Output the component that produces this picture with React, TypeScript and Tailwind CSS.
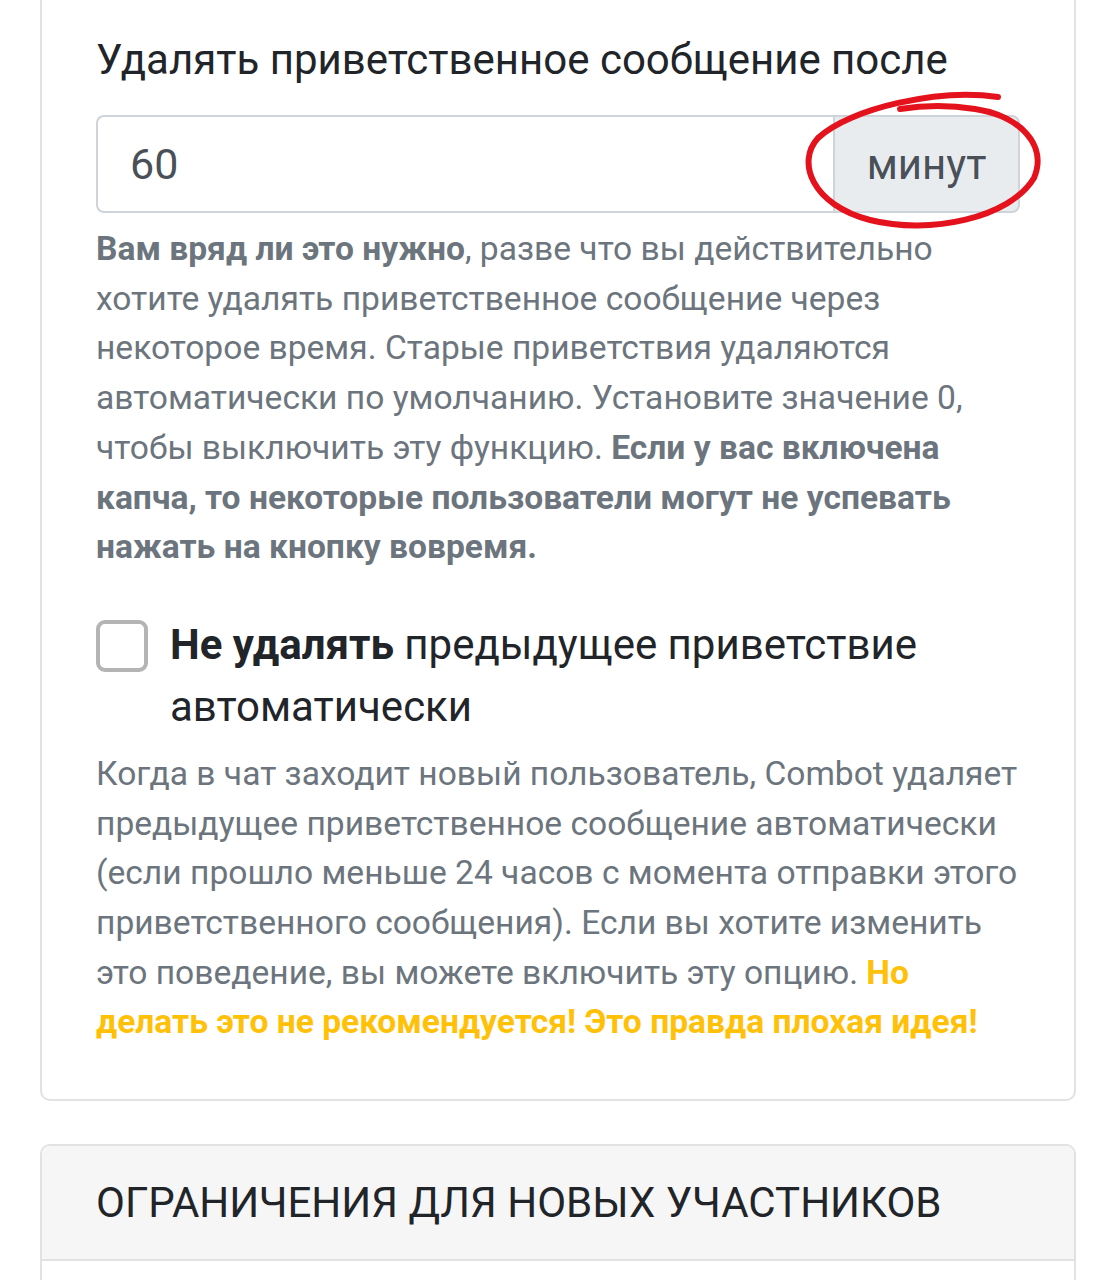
export default function App() {
  const help = "text-[#6c757d] text-[33.6px] leading-[49.7px]";
  return (
    <div className="relative w-[1114px] h-[1280px] overflow-hidden bg-white" style={{ fontFamily: "Roboto, 'Noto Sans', sans-serif" }}>
      <div className="ml-[40px] mr-[38px] border-2 border-t-0 border-[#e2e2e2] rounded-b-[10px] px-[54px] pt-[31px] pb-[52px]">
        <div className="text-[42px] leading-[58px] text-[#212529]">Удалять приветственное сообщение после</div>
        <div className="mt-[26px] flex h-[98px]">
          <div className="flex-1 flex items-center border-2 border-r-0 border-[#ced4da] rounded-l-[8px] pl-[32px] text-[43px] text-[#495057]">60</div>
          <div className="w-[187px] flex items-center justify-center border-2 border-[#ced4da] rounded-r-[8px] bg-[#e9ecef] text-[42px] text-[#495057]">минут</div>
        </div>
        <p className={`mt-[11px] ${help}`}>
          <b className="font-bold">Вам вряд ли это нужно</b>, разве что вы действительно хотите удалять приветственное сообщение через некоторое время. Старые приветствия удаляются автоматически по умолчанию. Установите значение 0, чтобы выключить эту функцию. <b className="font-bold">Если у вас включена капча, то некоторые пользователи могут не успевать нажать на кнопку вовремя.</b>
        </p>
        <div className="mt-[42px] flex gap-[22px]">
          <div className="mt-[6px] shrink-0 w-[52px] h-[52px] rounded-[9px] border-[4px] border-[#b4b4b4] bg-white"></div>
          <div className="text-[42px] leading-[62px] text-[#212529]">
            <b className="font-bold">Не удалять</b> предыдущее приветствие автоматически
          </div>
        </div>
        <p className={`mt-[11px] ${help}`}>
          Когда в чат заходит новый пользователь, Combot удаляет предыдущее приветственное сообщение автоматически (если прошло меньше 24 часов с момента отправки этого приветственного сообщения). Если вы хотите изменить это поведение, вы можете включить эту опцию. <b className="font-bold text-[#ffc107]">Но делать это не рекомендуется! Это правда плохая идея!</b>
        </p>
      </div>
      <div className="mt-[43px] ml-[40px] mr-[38px] border-2 border-[#e2e2e2] rounded-t-[10px] h-[200px]">
        <div className="h-[115px] bg-[#f6f6f6] border-b-2 border-[#e2e2e2] rounded-t-[8px] px-[54px] flex items-center">
          <span className="text-[42px] text-[#212529] whitespace-nowrap">ОГРАНИЧЕНИЯ ДЛЯ НОВЫХ УЧАСТНИКОВ</span>
        </div>
      </div>
      <svg className="absolute inset-0 pointer-events-none" width="1114" height="1280" viewBox="0 0 1114 1280">
        <path d="M 998 97 C 940 88, 850 108, 818 138 C 796 162, 812 205, 870 220 C 930 235, 1010 218, 1034 178 C 1048 145, 1020 116, 975 109 C 950 105, 925 105, 900 109" fill="none" stroke="#e3121c" strokeWidth="6" strokeLinecap="round" />
      </svg>
    </div>
  );
}
